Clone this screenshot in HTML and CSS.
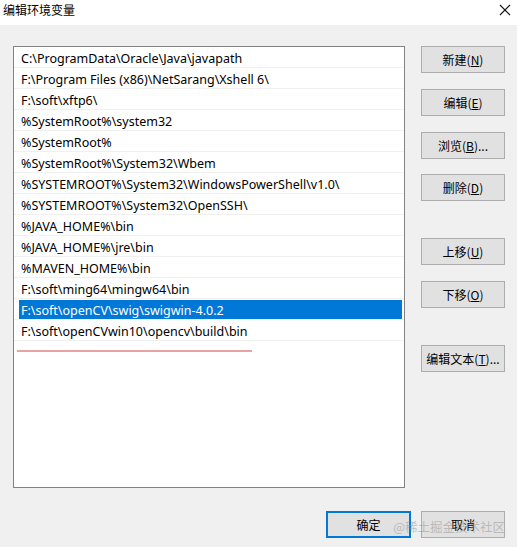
FILE: index.html
```html
<!DOCTYPE html>
<html lang="zh-CN">
<head>
<meta charset="utf-8">
<title>编辑环境变量</title>
<link rel="stylesheet" href="styles.css">
</head>
<body>
<div class="window">
  <div class="titlebar">
    <span class="title">编辑环境变量</span>
    <svg class="close" width="12" height="12" viewBox="0 0 12 12"><path d="M1 1 L11 11 M11 1 L1 11" stroke="#111" stroke-width="1.1" fill="none"/></svg>
  </div>
  <div class="content">
    <div class="main">
      <div class="list">
        <div class="row">C:\ProgramData\Oracle\Java\javapath</div>
        <div class="row">F:\Program Files (x86)\NetSarang\Xshell 6\</div>
        <div class="row">F:\soft\xftp6\</div>
        <div class="row">%SystemRoot%\system32</div>
        <div class="row">%SystemRoot%</div>
        <div class="row">%SystemRoot%\System32\Wbem</div>
        <div class="row">%SYSTEMROOT%\System32\WindowsPowerShell\v1.0\</div>
        <div class="row">%SYSTEMROOT%\System32\OpenSSH\</div>
        <div class="row">%JAVA_HOME%\bin</div>
        <div class="row">%JAVA_HOME%\jre\bin</div>
        <div class="row">%MAVEN_HOME%\bin</div>
        <div class="row">F:\soft\ming64\mingw64\bin</div>
        <div class="row selected">F:\soft\openCV\swig\swigwin-4.0.2</div>
        <div class="row">F:\soft\openCVwin10\opencv\build\bin</div>
        <div class="mark"></div>
      </div>
      <div class="side">
        <button class="btn">新建(<u>N</u>)</button>
        <button class="btn">编辑(<u>E</u>)</button>
        <button class="btn">浏览(<u>B</u>)...</button>
        <button class="btn">删除(<u>D</u>)</button>
        <button class="btn group">上移(<u>U</u>)</button>
        <button class="btn">下移(<u>O</u>)</button>
        <button class="btn group">编辑文本(<u>T</u>)...</button>
      </div>
    </div>
    <div class="footer">
      <button class="btn primary">确定</button>
      <button class="btn">取消</button>
      <span class="watermark">@稀土掘金技术社区</span>
    </div>
  </div>
</div>
</body>
</html>
```

FILE: styles.css
```css
* { box-sizing: border-box; }
html, body { margin: 0; padding: 0; }
body {
  width: 517px;
  height: 547px;
  background: #f0f0f0;
  font-family: "Noto Sans", "Noto Sans CJK SC", sans-serif;
  font-size: 12px;
  color: #000;
  overflow: hidden;
}
.window { width: 517px; height: 547px; display: flex; flex-direction: column; }
.titlebar {
  height: 25px;
  background: #fff;
  display: flex;
  align-items: flex-start;
  justify-content: space-between;
  padding: 1px 6px 0 3px;
}
.title { font-family: "Noto Sans CJK SC", sans-serif; font-size: 12px; line-height: 17px; color: #000; }
.close { margin-top: 3px; }
.content { flex: 1; padding: 21px 12px 0 13px; position: relative; }
.main { display: flex; gap: 16px; }
.list {
  width: 392px;
  height: 442px;
  background: #fff;
  border: 1px solid #828282;
}
.row {
  height: 21px;
  line-height: 19px;
  padding-top: 2px;
  border-bottom: 1px solid #f0f0f0;
  padding-left: 7px;
  white-space: nowrap;
  overflow: hidden;
  font-size: 12.5px;
  font-family: "Noto Sans", "Noto Sans CJK SC", sans-serif;
}
.row.selected {
  color: #fff;
  background: linear-gradient(#0078d7, #0078d7) 5px 1px / calc(100% - 7px) 20px no-repeat;
}
.mark {
  margin: 9px 0 0 3px;
  width: 235px;
  height: 2px;
  background: #eaa3a3;
}
.side { display: flex; flex-direction: column; gap: 16px; }
.btn {
  width: 84px;
  height: 27px;
  background: #e1e1e1;
  border: 1px solid #adadad;
  font-family: "Noto Sans CJK SC", sans-serif;
  font-size: 12px;
  color: #000;
  padding: 0;
  margin: 0;
}
.btn u { text-decoration: underline; text-underline-offset: 1px; }
.side .btn:nth-child(4) { margin-top: -1px; }
.side .group { margin-top: 21px; }
.footer {
  display: flex;
  justify-content: flex-end;
  gap: 10px;
  margin-top: 23px;
  position: relative;
}
.primary { width: 85px; border: 2px solid #0078d7; }
.watermark {
  position: absolute;
  right: 0;
  top: 6px;
  font-family: "Noto Sans CJK SC", sans-serif;
  font-size: 12.5px;
  color: rgba(150, 150, 150, 0.55);
  pointer-events: none;
}
```
